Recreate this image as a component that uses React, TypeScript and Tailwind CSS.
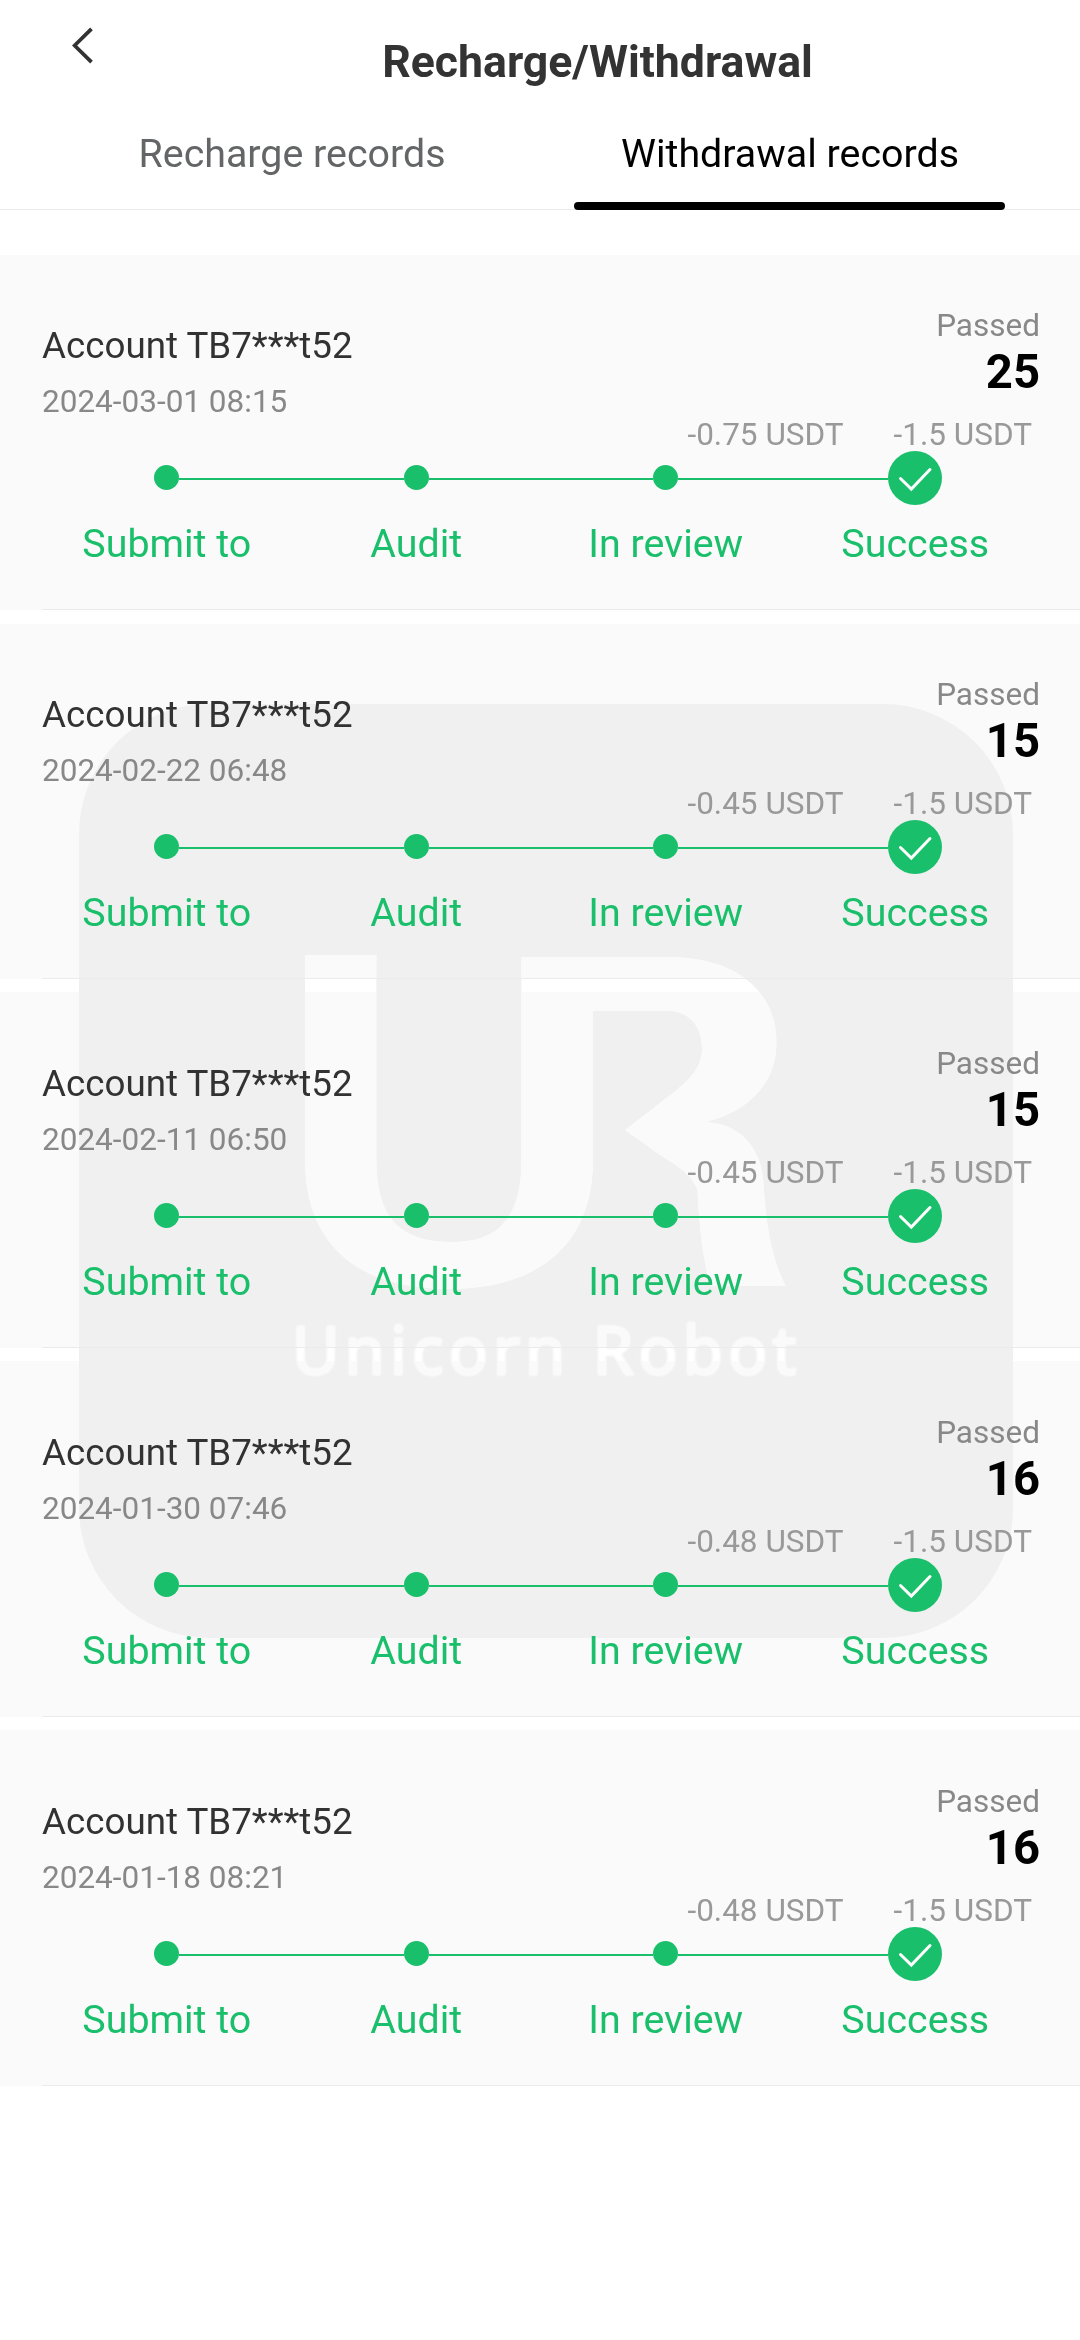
type WithdrawalRecord = {
  date: string;
  amount: string;
  fee: string;
};

const records: WithdrawalRecord[] = [
  { date: "2024-03-01 08:15", amount: "25", fee: "-0.75 USDT" },
  { date: "2024-02-22 06:48", amount: "15", fee: "-0.45 USDT" },
  { date: "2024-02-11 06:50", amount: "15", fee: "-0.45 USDT" },
  { date: "2024-01-30 07:46", amount: "16", fee: "-0.48 USDT" },
  { date: "2024-01-18 08:21", amount: "16", fee: "-0.48 USDT" },
];

const steps = ["Submit to", "Audit", "In review", "Success"];

const Header = () => {
  return (
    <header className="flex h-[123px]">
      <button className="flex w-[115px] shrink-0 pl-[72px] pt-[27px]">
        <svg width="22" height="37" viewBox="0 0 22 37" fill="none">
          <path d="M19.5 1.8L2.6 18.5L19.5 35.2" stroke="#333333" strokeWidth="3.8" />
        </svg>
      </button>
      <h1 className="flex-1 text-center text-[44.6px] leading-[124px] font-bold text-[#333333]">
        Recharge/Withdrawal
      </h1>
    </header>
  );
};

const Tabs = () => {
  return (
    <nav className="h-[87px] border-b border-[#ebebeb] px-[42px]">
      <div className="grid grid-cols-2 text-center text-[39.375px] leading-[61px]">
        <div className="pl-[2px] text-[#646566]">Recharge records</div>
        <div className="flex flex-col items-center text-black">
          <span className="pl-[2px]">Withdrawal records</span>
          <span className="mt-[18px] h-2 w-[431px] rounded-full bg-black" />
        </div>
      </div>
    </nav>
  );
};

const Steps = () => {
  return (
    <div className="grid grid-cols-4">
      {steps.map((step, i) => {
        const first = i === 0;
        const last = i === steps.length - 1;
        return (
          <div key={step} className="flex flex-col">
            <div className="flex h-[54px] items-center">
              <span className={first ? "flex-1" : "mt-[2px] h-[2px] flex-1 bg-[#1abf6b]"} />
              {last ? (
                <svg width="54" height="54" viewBox="0 0 54 54" fill="none">
                  <circle cx="27" cy="27" r="27" fill="#1abf6b" />
                  <path
                    d="M12.5 27.5L23.3 38L42 18.5"
                    stroke="#ffffff"
                    strokeWidth="3"
                    strokeLinecap="round"
                  />
                </svg>
              ) : (
                <span className="mb-px size-[25px] rounded-full bg-[#1abf6b]" />
              )}
              <span className={last ? "flex-1" : "mt-[2px] h-[2px] flex-1 bg-[#1abf6b]"} />
            </div>
            <span className="mt-[15px] text-center text-[39.375px] leading-[47px] text-[#1abf6b]">
              {step}
            </span>
          </div>
        );
      })}
    </div>
  );
};

const RecordCard = ({ record }: { record: WithdrawalRecord }) => {
  return (
    <li className="h-[355px] bg-[#fafafa] pl-[42px] nth-[n+3]:-mt-px nth-[n+3]:h-[356px] nth-[n+3]:pt-px">
      <div className="h-full border-b border-[#ebebeb] pr-10">
        <div className="relative z-10">
          <div className="flex h-[196px] justify-between">
            <div className="pt-[69px]">
              <p className="text-[36.75px] leading-[43px] text-[#323233]">Account TB7***t52</p>
              <p className="mt-4 text-[31.5px] leading-[37px] text-[#888888]">
                {record.date}
              </p>
            </div>
            <div className="pt-[52px] text-right">
              <p className="text-[31.5px] leading-[37px] text-[#888888]">Passed</p>
              <p className="mt-[3px] text-[47.25px] leading-[50px] font-bold text-black">
                {record.amount}
              </p>
              <p className="mt-[21px] flex justify-end gap-[50px] pr-2 text-[31.5px] leading-[33px] text-[#999999]">
                <span>{record.fee}</span>
                <span>-1.5 USDT</span>
              </p>
            </div>
          </div>
          <Steps />
        </div>
      </div>
    </li>
  );
};

// darken keeps the card edges visible through the white lettering
const Watermark = () => {
  return (
    <svg
      className="absolute left-[79px] top-[704px] mix-blend-darken"
      width="934"
      height="934"
      viewBox="79 704 934 934"
    >
      <rect x="79" y="704" width="934" height="934" rx="130" fill="#f0f0f0" />
      <path
        fill="#ffffff"
        d="M305 955H376.4V1160C376.4 1218 400 1242 452 1242C500 1242 521.4 1216 521.4 1160V957H668
        C735 957 776.5 990 776.5 1043C776.5 1082 750 1111 706 1122C742 1124 762 1150 763.5 1183
        C766 1228 773 1262 785.7 1286H710.7C703 1262 699 1225 697.5 1190C692 1174 676 1165 660 1155
        L625 1130L660 1103C682 1086 702 1072 702 1049C702 1024 688 1010.7 665 1010.7H593V1160
        C593 1245 538 1289 449 1289C358 1289 305 1245 305 1160Z"
      />
      <text
        x="292"
        y="1374"
        textLength="504"
        fill="#ffffff"
        stroke="#ffffff"
        strokeWidth="2.5"
        className="font-['Open_Sans',sans-serif] text-[65px] font-medium blur-[1px]"
      >
        Unicorn Robot
      </text>
    </svg>
  );
};

const App = () => {
  return (
    <div className="relative h-[2340px] w-[1080px] overflow-hidden bg-white font-[Roboto,sans-serif]">
      <Header />
      <Tabs />
      <ul className="mt-[45px] flex flex-col gap-[14px]">
        {records.map((record) => (
          <RecordCard key={record.date} record={record} />
        ))}
      </ul>
      <Watermark />
    </div>
  );
};

export default App;
